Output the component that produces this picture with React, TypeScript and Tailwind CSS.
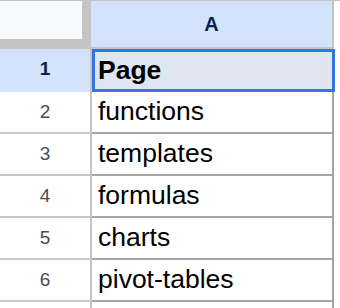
const rows = ["functions", "templates", "formulas", "charts", "pivot-tables"];

export default function App() {
  return (
    <div className="w-[340px] h-[308px] overflow-hidden bg-white font-['Liberation_Sans',Arial,sans-serif]">
      {/* header */}
      <div className="flex h-[49px] border-t border-[#c4c4c4]">
        <div className="w-[91px] h-[48px] bg-[#c4c4c4] shrink-0">
          <div className="w-[82px] h-[38px] bg-[#f8f9fa]" />
        </div>
        <div className="w-[243px] shrink-0 flex flex-col">
          <div className="h-[46px] bg-[#d3e3fd] border-r-2 border-[#c4c4c4] flex items-center justify-center text-[20px] font-bold text-[#0b1f4f]">
            A
          </div>
          <div className="h-[2px] bg-[#c4c4c4]" />
        </div>
      </div>

      {/* row 1 */}
      <div className="flex h-[43px]">
        <div className="w-[90px] shrink-0 bg-[#d3e3fd] border-b-2 border-[#d3e3fd] flex items-center justify-center text-[19px] font-bold text-[#0b1f4f]">
          1
        </div>
        <div className="w-[2px] bg-[#c4c4c4] shrink-0" />
        <div className="w-[243px] shrink-0 bg-[#dfe6f0] border-[3px] border-[#3574e3] flex items-center pl-[3px] text-[26.5px] font-bold text-black">
          Page
        </div>
      </div>

      {rows.map((r, i) => (
        <div key={r} className="flex h-[42px]">
          <div className="w-[90px] shrink-0 border-b-2 border-[#c8c8c8] flex items-center justify-center text-[19px] text-[#4a4d52]">
            {i + 2}
          </div>
          <div className="w-[2px] bg-[#c4c4c4] shrink-0" />
          <div className="w-[242px] shrink-0 border-b-2 border-r-2 border-[#a6a6a6] flex items-center pl-[6px] text-[26.5px] text-black">
            {r}
          </div>
        </div>
      ))}

      <div className="flex h-[20px]">
        <div className="w-[90px] shrink-0" />
        <div className="w-[2px] bg-[#c4c4c4] shrink-0" />
        <div className="w-[242px] shrink-0 border-r-2 border-[#a6a6a6]" />
      </div>
    </div>
  );
}
